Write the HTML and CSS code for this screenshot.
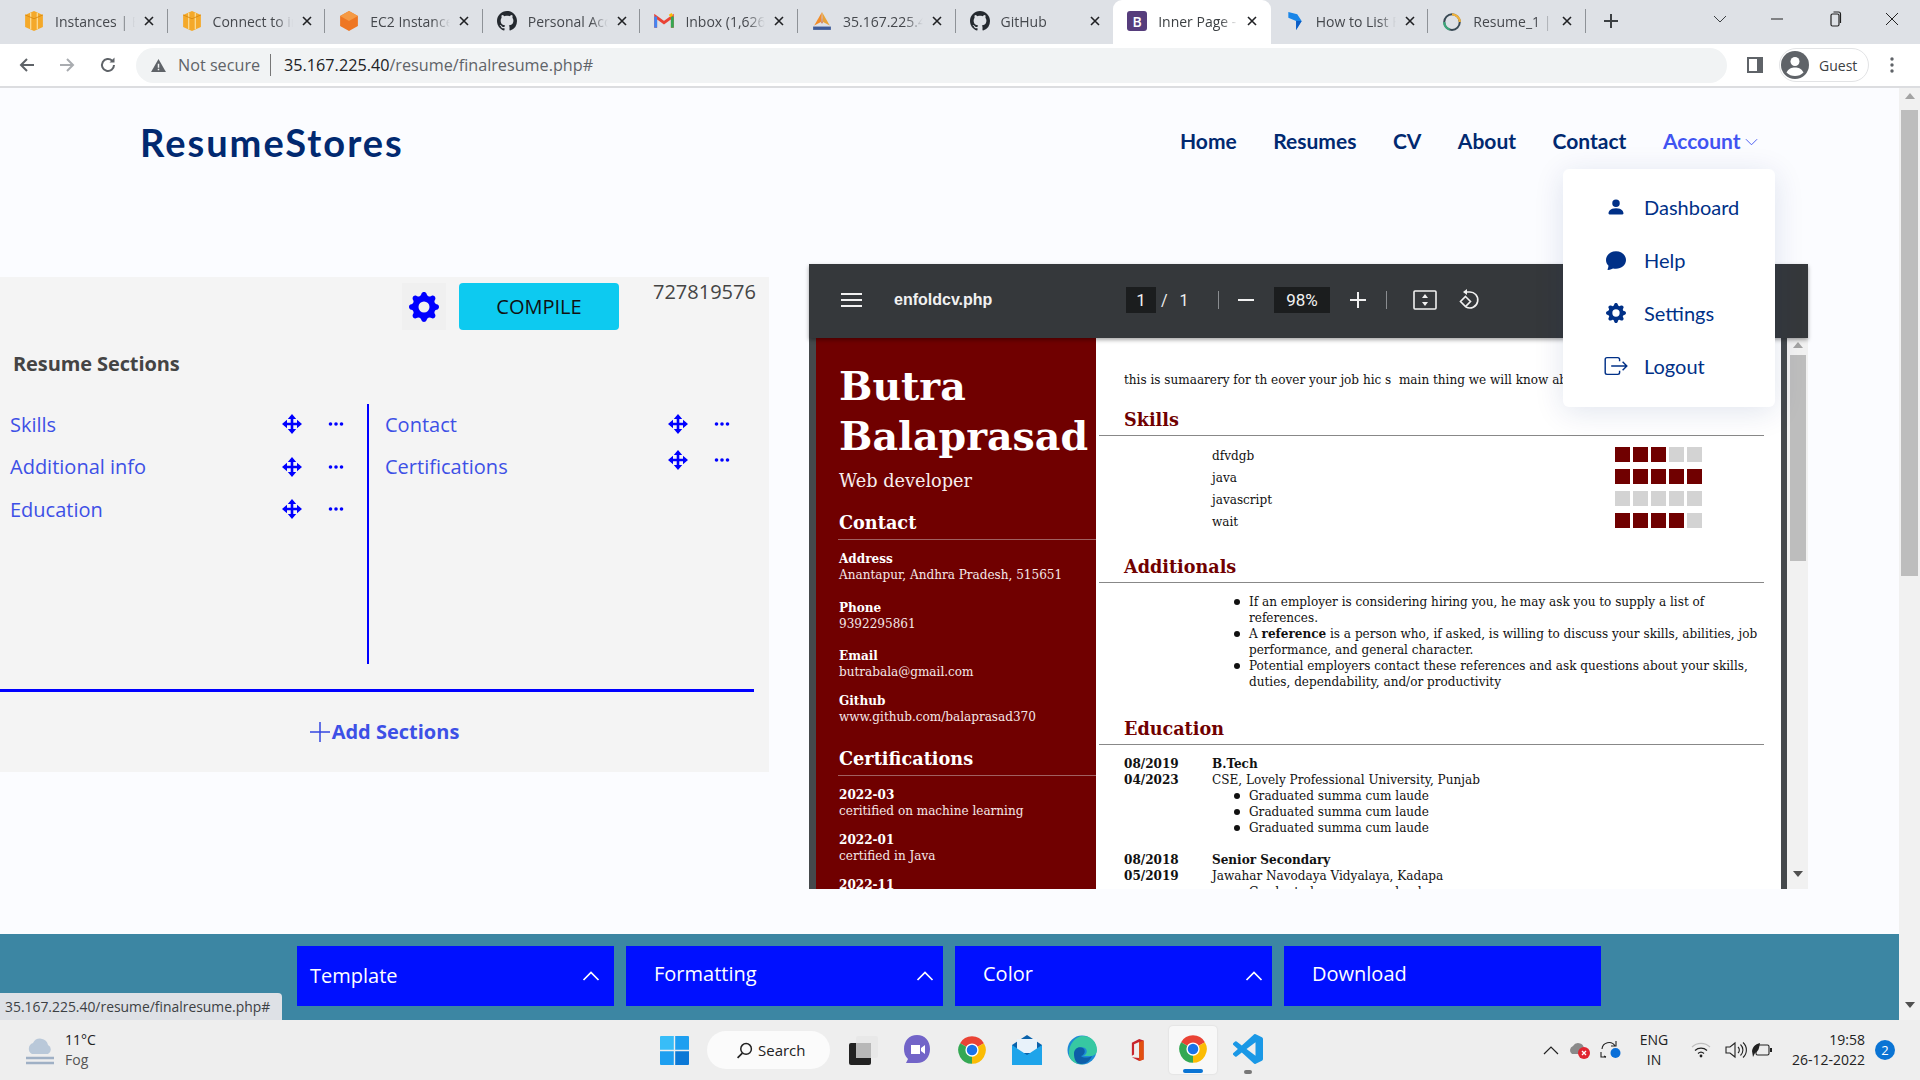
FILE: index.html
```html
<!DOCTYPE html>
<html lang="en">
<head>
<meta charset="utf-8">
<title>Inner Page</title>
<link rel="stylesheet" href="styles.css">
</head>
<body>
<svg class="defs" width="0" height="0" aria-hidden="true">
  <defs>
    <symbol id="gh" viewBox="0 0 16 16"><path d="M8 0C3.58 0 0 3.58 0 8c0 3.54 2.29 6.53 5.47 7.59.4.07.55-.17.55-.38 0-.19-.01-.82-.01-1.49-2.01.37-2.53-.49-2.69-.94-.09-.23-.48-.94-.82-1.13-.28-.15-.68-.52-.01-.53.63-.01 1.08.58 1.23.82.72 1.21 1.87.87 2.33.66.07-.52.28-.87.51-1.07-1.78-.2-3.64-.89-3.64-3.95 0-.87.31-1.59.82-2.15-.08-.2-.36-1.02.08-2.12 0 0 .67-.21 2.2.82.64-.18 1.32-.27 2-.27.68 0 1.36.09 2 .27 1.53-1.04 2.2-.82 2.2-.82.44 1.1.16 1.92.08 2.12.51.56.82 1.27.82 2.15 0 3.07-1.87 3.75-3.65 3.95.29.25.54.73.54 1.48 0 1.07-.01 1.93-.01 2.2 0 .21.15.46.55.38A8.013 8.013 0 0016 8c0-4.42-3.58-8-8-8z" fill="currentColor"/></symbol>
    <symbol id="gear" viewBox="0 0 16 16"><path d="M9.405 1.05c-.413-1.4-2.397-1.4-2.81 0l-.1.34a1.464 1.464 0 0 1-2.105.872l-.31-.17c-1.283-.698-2.686.705-1.987 1.987l.169.311c.446.82.023 1.841-.872 2.105l-.34.1c-1.4.413-1.4 2.397 0 2.81l.34.1a1.464 1.464 0 0 1 .872 2.105l-.17.31c-.698 1.283.705 2.686 1.987 1.987l.311-.169a1.464 1.464 0 0 1 2.105.872l.1.34c.413 1.4 2.397 1.4 2.81 0l.1-.34a1.464 1.464 0 0 1 2.105-.872l.31.17c1.283.698 2.686-.705 1.987-1.987l-.169-.311a1.464 1.464 0 0 1 .872-2.105l.34-.1c1.4-.413 1.4-2.397 0-2.81l-.34-.1a1.464 1.464 0 0 1-.872-2.105l.17-.31c.698-1.283-.705-2.686-1.987-1.987l-.311.169a1.464 1.464 0 0 1-2.105-.872l-.1-.34zM8 10.93a2.929 2.929 0 1 1 0-5.86 2.929 2.929 0 0 1 0 5.858z" fill="currentColor"/></symbol>
    <symbol id="x" viewBox="0 0 12 12"><path d="M2 2l8 8M10 2l-8 8" stroke="currentColor" stroke-width="1.6" fill="none"/></symbol>
    <symbol id="move" viewBox="0 0 20 20"><path d="M10 2v16M2 10h16" stroke="currentColor" stroke-width="2.600"/><path d="M10 0l4.200 5H5.800zM10 20l-4.200-5h8.400zM0 10l5-4.200v8.400zM20 10l-5 4.200V5.800z" fill="currentColor"/></symbol>
    <symbol id="dots" viewBox="0 0 16 4"><circle cx="2.500" cy="2" r="1.800" fill="currentColor"/><circle cx="8" cy="2" r="1.800" fill="currentColor"/><circle cx="13.500" cy="2" r="1.800" fill="currentColor"/></symbol>
    <symbol id="chev" viewBox="0 0 18 10"><path d="M1.500 9L9 1.500 16.500 9" stroke="currentColor" stroke-width="1.700" fill="none"/></symbol>
    <symbol id="box" viewBox="0 0 18 18"><path d="M9 0l8 3.500v11L9 18l-8-3.500v-11z" fill="#f4a92a"/><path d="M6 1.500v15M12 1.500v15" stroke="#fbd98e" stroke-width="1.200"/><path d="M1 3.500l8 3.500 8-3.500" fill="none" stroke="#d98a12" stroke-width=".8"/></symbol>
    <symbol id="chrome" viewBox="0 0 24 24"><path d="M2.470 6.500A11 11 0 0 1 21.530 6.500L12 12z" fill="#ea4335"/><path d="M21.530 6.500A11 11 0 0 1 12 23L12 12z" fill="#fbbc04"/><path d="M12 23A11 11 0 0 1 2.470 6.500L12 12z" fill="#34a853"/><circle cx="12" cy="12" r="5.300" fill="#fff"/><circle cx="12" cy="12" r="4.200" fill="#1a73e8"/></symbol>
  </defs>
</svg>

<div class="app">
  <div class="tabs">
    <div class="tab"><svg class="fav"><use href="#box"/></svg><span class="tab-title">Instances | EC2</span><svg class="tab-x"><use href="#x"/></svg><i class="sep"></i></div>
    <div class="tab"><svg class="fav"><use href="#box"/></svg><span class="tab-title">Connect to instance</span><svg class="tab-x"><use href="#x"/></svg><i class="sep"></i></div>
    <div class="tab"><svg class="fav" viewBox="0 0 18 18"><path d="M9 0l8 4.500v9L9 18l-8-4.500v-9z" fill="#ee7623"/><path d="M9 0l8 4.500L9 9 1 4.500z" fill="#f59a45"/></svg><span class="tab-title">EC2 Instance Connect</span><svg class="tab-x"><use href="#x"/></svg><i class="sep"></i></div>
    <div class="tab"><svg class="fav gh"><use href="#gh"/></svg><span class="tab-title">Personal Access</span><svg class="tab-x"><use href="#x"/></svg><i class="sep"></i></div>
    <div class="tab"><svg class="fav" viewBox="0 0 18 14"><path d="M1.500 13V3l7.500 5.500L16.500 3v10" fill="none" stroke="#ea4335" stroke-width="2.600"/><path d="M1.500 13V3" stroke="#4285f4" stroke-width="2.600"/><path d="M16.500 13V3" stroke="#34a853" stroke-width="2.600"/><path d="M14 2.500l2.500-1.500" stroke="#fbbc04" stroke-width="2.600"/></svg><span class="tab-title">Inbox (1,626) - gmail</span><svg class="tab-x"><use href="#x"/></svg><i class="sep"></i></div>
    <div class="tab"><svg class="fav" viewBox="0 0 18 18"><path d="M9 1l-1 9-6 3z" fill="#f28c28"/><path d="M9 1l1 9 6 3z" fill="#e8a33a"/><path d="M9 3l-.6 8h1.200z" fill="#c9571b"/><path d="M1 14h16v3H1z" fill="#3f5c99"/></svg><span class="tab-title">35.167.225.40 / localhost</span><svg class="tab-x"><use href="#x"/></svg><i class="sep"></i></div>
    <div class="tab"><svg class="fav gh"><use href="#gh"/></svg><span class="tab-title">GitHub</span><svg class="tab-x"><use href="#x"/></svg></div>
    <div class="tab tab-active"><span class="fav fav-b">B</span><span class="tab-title">Inner Page - Resume</span><svg class="tab-x"><use href="#x"/></svg></div>
    <div class="tab"><svg class="fav" viewBox="0 0 18 18"><path d="M3 1l8 2 4 6-5 8V9L3 6z" fill="#1a86e8"/><path d="M10 9l5 0-5 8z" fill="#0b5cc4"/></svg><span class="tab-title">How to List Files</span><svg class="tab-x"><use href="#x"/></svg><i class="sep"></i></div>
    <div class="tab"><svg class="fav" viewBox="0 0 18 18"><circle cx="9" cy="10" r="7" fill="none" stroke="#3a4a55" stroke-width="1.800"/><path d="M9 3a7 7 0 0 1 7 7" fill="none" stroke="#f0b23c" stroke-width="2"/><path d="M2 10a7 7 0 0 0 5 6.700" fill="none" stroke="#3da67a" stroke-width="2"/></svg><span class="tab-title">Resume_1 | Overleaf</span><svg class="tab-x"><use href="#x"/></svg><i class="sep"></i></div>
    <svg class="new-tab" viewBox="0 0 16 16"><path d="M8 1v14M1 8h14" stroke="#3c4043" stroke-width="2"/></svg>
    <svg class="win-caret" viewBox="0 0 14 8"><path d="M1 1l6 6 6-6" fill="none" stroke="#3c4043" stroke-width="1"/></svg>
    <svg class="win-min" viewBox="0 0 12 2"><path d="M0 1h12" stroke="#222" stroke-width="1"/></svg>
    <svg class="win-max" viewBox="0 0 12 16"><rect x="1" y="3" width="8" height="12" rx="1.500" fill="none" stroke="#222" stroke-width="1.200"/><path d="M3.500 1h5a2 2 0 0 1 2 2v9" fill="none" stroke="#222" stroke-width="1.200"/></svg>
    <svg class="win-close" viewBox="0 0 14 14"><path d="M1 1l12 12M13 1L1 13" stroke="#222" stroke-width="1"/></svg>
  </div>

  <div class="toolbar">
    <svg class="nav-icon" viewBox="0 0 18 18"><path d="M16 9H3M9 3L3 9l6 6" fill="none" stroke="#5f6368" stroke-width="2"/></svg>
    <svg class="nav-icon nav-fwd" viewBox="0 0 18 18"><path d="M2 9h13M9 3l6 6-6 6" fill="none" stroke="#a9acb0" stroke-width="2"/></svg>
    <svg class="nav-icon nav-rel" viewBox="0 0 18 18"><path d="M15 9a6 6 0 1 1-1.800-4.300" fill="none" stroke="#5f6368" stroke-width="2"/><path d="M15.500 1.500v5h-5z" fill="#5f6368"/></svg>
    <div class="omni">
      <svg class="warn" viewBox="0 0 16 14"><path d="M8 0l8 14H0z" fill="#5f6368"/><path d="M7.200 5h1.600v4.500H7.200zM7.200 10.500h1.600V12H7.200z" fill="#f1f3f4"/></svg>
      <span class="not-secure">Not secure</span>
      <i class="omni-sep"></i>
      <span class="url"><span class="url-host">35.167.225.40</span>/resume/finalresume.php#</span>
    </div>
    <svg class="side-icon" viewBox="0 0 16 16"><path d="M0 0h16v16H0z" fill="#5f6368"/><path d="M2 2h8v12H2z" fill="#fff"/></svg>
    <div class="guest">
      <svg class="avatar" viewBox="0 0 28 28"><circle cx="14" cy="14" r="14" fill="#5f6368"/><circle cx="14" cy="10.500" r="4.500" fill="#fff"/><path d="M5.500 21.500c2-4 5-5 8.500-5s6.500 1 8.500 5a12 12 0 0 1-17 0z" fill="#fff"/></svg>
      <span>Guest</span>
    </div>
    <svg class="kebab" viewBox="0 0 4 16"><circle cx="2" cy="2" r="1.700" fill="#5f6368"/><circle cx="2" cy="8" r="1.700" fill="#5f6368"/><circle cx="2" cy="14" r="1.700" fill="#5f6368"/></svg>
  </div>

  <div class="viewport">
    <main class="main">
      <header class="site-head">
        <div class="logo">ResumeStores</div>
        <nav class="site-nav">
          <div>Home</div><div>Resumes</div><div>CV</div><div>About</div><div>Contact</div>
          <div class="acct">Account</div>
          <svg class="nav-caret" viewBox="0 0 14 8"><path d="M1 1l6 6 6-6" fill="none" stroke="#4154f1" stroke-width="1"/></svg>
        </nav>
      </header>

      <div class="menu">
        <div class="menu-item"><svg class="menu-icon" viewBox="0 0 16 16"><path d="M3 14s-1 0-1-1 1-4 6-4 6 3 6 4-1 1-1 1H3zm5-6a3 3 0 1 0 0-6 3 3 0 0 0 0 6z" fill="#003087"/></svg><span>Dashboard</span></div>
        <div class="menu-item"><svg class="menu-icon" viewBox="0 0 16 16"><path d="M16 8c0 3.870-3.580 7-8 7a9 9 0 0 1-2.350-.3c-.58.3-1.930.87-4.150 1.230-.2.030-.35-.17-.27-.36.350-.82.660-1.910.760-2.900C.77 11.450 0 9.800 0 8c0-3.870 3.580-7 8-7s8 3.130 8 7z" fill="#003087"/></svg><span>Help</span></div>
        <div class="menu-item"><svg class="menu-icon menu-gear"><use href="#gear"/></svg><span>Settings</span></div>
        <div class="menu-item"><svg class="menu-icon" viewBox="0 0 20 16"><path d="M13 4V2.500A1.500 1.500 0 0 0 11.500 1h-9A1.500 1.500 0 0 0 1 2.500v11A1.500 1.500 0 0 0 2.500 15h9a1.500 1.500 0 0 0 1.500-1.500V12M6 8h13M15.500 4.500L19 8l-3.500 3.500" fill="none" stroke="#003087" stroke-width="1.200"/></svg><span>Logout</span></div>
      </div>

      <div class="workspace">
        <section class="panel">
          <div class="panel-top">
            <div class="gear-box"><svg class="gear-icon"><use href="#gear"/></svg></div>
            <button class="compile">COMPILE</button>
            <span class="doc-id">727819576</span>
          </div>
          <h2 class="panel-title">Resume Sections</h2>
          <div class="columns">
            <div class="col col-left">
              <div class="sec-row"><span class="sec-name">Skills</span><svg class="sec-move"><use href="#move"/></svg><svg class="sec-dots"><use href="#dots"/></svg></div>
              <div class="sec-row"><span class="sec-name">Additional info</span><svg class="sec-move"><use href="#move"/></svg><svg class="sec-dots"><use href="#dots"/></svg></div>
              <div class="sec-row"><span class="sec-name">Education</span><svg class="sec-move"><use href="#move"/></svg><svg class="sec-dots"><use href="#dots"/></svg></div>
            </div>
            <div class="col col-right">
              <div class="sec-row"><span class="sec-name">Contact</span><svg class="sec-move"><use href="#move"/></svg><svg class="sec-dots"><use href="#dots"/></svg></div>
              <div class="sec-row sec-row-high"><span class="sec-name">Certifications</span><svg class="sec-move"><use href="#move"/></svg><svg class="sec-dots"><use href="#dots"/></svg></div>
            </div>
          </div>
          <div class="panel-rule"></div>
          <div class="add-sec"><svg class="add-plus" viewBox="0 0 20 20"><path d="M10 0v20M0 10h20" stroke="#3346e0" stroke-width="1.500"/></svg>Add Sections</div>
        </section>

        <section class="viewer">
          <div class="viewer-bar">
            <svg class="vb-menu" viewBox="0 0 21 14"><path d="M0 1h21M0 7h21M0 13h21" stroke="#f1f1f1" stroke-width="2"/></svg>
            <span class="vb-file">enfoldcv.php</span>
            <span class="vb-input vb-page">1</span>
            <span class="vb-total">/ &nbsp;&nbsp;1</span>
            <i class="vb-sep"></i>
            <svg class="vb-minus" viewBox="0 0 16 2"><path d="M0 1h16" stroke="#f1f1f1" stroke-width="2"/></svg>
            <span class="vb-input vb-zoom">98%</span>
            <svg class="vb-plus" viewBox="0 0 16 16"><path d="M8 0v16M0 8h16" stroke="#f1f1f1" stroke-width="2"/></svg>
            <i class="vb-sep vb-sep2"></i>
            <svg class="vb-fit" viewBox="0 0 24 20"><rect x="1" y="1" width="22" height="18" rx="1" fill="none" stroke="#f1f1f1" stroke-width="1.600"/><path d="M12 4l3 4H9zM12 16l-3-4h6z" fill="#f1f1f1"/></svg>
            <svg class="vb-rot" viewBox="0 0 22 22"><path d="M8 3h3a8 8 0 1 1-3 15" fill="none" stroke="#f1f1f1" stroke-width="1.600"/><path d="M9 0v6L5 3z" fill="#f1f1f1"/><path d="M7.500 7.500l5 5-5 5-5-5z" fill="none" stroke="#f1f1f1" stroke-width="1.600"/></svg>
          </div>
          <div class="viewer-body">
            <div class="pdf-page">
              <aside class="cv-side">
                <h1 class="cv-name">Butra Balaprasad</h1>
                <p class="cv-role">Web developer</p>
                <h3 class="cv-side-h">Contact</h3>
                <div class="cv-item cv-item-first"><b>Address</b><br>Anantapur, Andhra Pradesh, 515651</div>
                <div class="cv-item cv-item-mid"><b>Phone</b><br>9392295861</div>
                <div class="cv-item cv-item-tight"><b>Email</b><br>butrabala@gmail.com</div>
                <div class="cv-item"><b>Github</b><br>www.github.com/balaprasad370</div>
                <h3 class="cv-side-h cv-side-h2">Certifications</h3>
                <div class="cv-item cv-item-first cv-item-tight"><b>2022-03</b><br>ceritified on machine learning</div>
                <div class="cv-item cv-item-tight"><b>2022-01</b><br>certified in Java</div>
                <div class="cv-item"><b>2022-11</b></div>
              </aside>
              <div class="cv-main">
                <p class="cv-summary">this is sumaarery for th eover your job hic s&nbsp; main thing we will know about you</p>
                <h3 class="cv-h cv-h-first">Skills</h3>
                <div class="skills">
                  <div class="skill"><span>dfvdgb</span><div class="meter"><i class="on"></i><i class="on"></i><i class="on"></i><i></i><i></i></div></div>
                  <div class="skill"><span>java</span><div class="meter"><i class="on"></i><i class="on"></i><i class="on"></i><i class="on"></i><i class="on"></i></div></div>
                  <div class="skill"><span>javascript</span><div class="meter"><i></i><i></i><i></i><i></i><i></i></div></div>
                  <div class="skill"><span>wait</span><div class="meter"><i class="on"></i><i class="on"></i><i class="on"></i><i class="on"></i><i></i></div></div>
                </div>
                <h3 class="cv-h">Additionals</h3>
                <ul class="cv-list cv-list-add">
                  <li>If an employer is considering hiring you, he may ask you to supply a list of references.</li>
                  <li>A <b>reference</b> is a person who, if asked, is willing to discuss your skills, abilities, job performance, and general character.</li>
                  <li>Potential employers contact these references and ask questions about your skills, duties, dependability, and/or productivity</li>
                </ul>
                <h3 class="cv-h cv-h-edu">Education</h3>
                <div class="edu">
                  <div class="edu-dates"><b>08/2019</b><br><b>04/2023</b></div>
                  <div><b>B.Tech</b><br>CSE, Lovely Professional University, Punjab
                    <ul class="cv-list"><li>Graduated summa cum laude</li><li>Graduated summa cum laude</li><li>Graduated summa cum laude</li></ul>
                  </div>
                </div>
                <div class="edu edu-next">
                  <div class="edu-dates"><b>08/2018</b><br><b>05/2019</b></div>
                  <div><b>Senior Secondary</b><br>Jawahar Navodaya Vidyalaya, Kadapa
                    <ul class="cv-list"><li>Graduated summa cum laude</li></ul>
                  </div>
                </div>
              </div>
            </div>
            <div class="sb sb-pdf">
              <svg class="sb-up" viewBox="0 0 10 6"><path d="M5 0l5 6H0z" fill="#a3a3a3"/></svg>
              <div class="sb-thumb"></div>
              <svg class="sb-down" viewBox="0 0 10 6"><path d="M5 6L0 0h10z" fill="#505050"/></svg>
            </div>
          </div>
        </section>
      </div>

      <div class="action-bar">
        <button class="act act-t">Template<svg class="act-chev"><use href="#chev"/></svg></button>
        <button class="act">Formatting<svg class="act-chev"><use href="#chev"/></svg></button>
        <button class="act">Color<svg class="act-chev"><use href="#chev"/></svg></button>
        <button class="act">Download</button>
      </div>
    </main>
    <div class="sb sb-page">
      <svg class="sb-up" viewBox="0 0 10 6"><path d="M5 0l5 6H0z" fill="#a3a3a3"/></svg>
      <div class="sb-thumb"></div>
      <svg class="sb-down" viewBox="0 0 10 6"><path d="M5 6L0 0h10z" fill="#505050"/></svg>
    </div>
    <div class="status">35.167.225.40/resume/finalresume.php#</div>
  </div>

  <footer class="taskbar">
    <div class="weather">
      <svg class="w-icon" viewBox="0 0 32 32"><path d="M8 20a6 6 0 0 1 1-11 8 8 0 0 1 15 2 5 5 0 0 1 0 9z" fill="#b9c8d9"/><path d="M2 24h28M2 29h28" stroke="#9fb0c5" stroke-width="2.500"/></svg>
      <div class="w-text"><span>11°C</span><span class="w-sub">Fog</span></div>
    </div>
    <div class="tb-center">
      <svg class="tb-win" viewBox="0 0 29 29"><path d="M0 1a1 1 0 0 1 1-1h12.800v13.800H0z" fill="#38bdf8"/><path d="M15.200 0H28a1 1 0 0 1 1 1v12.800H15.200z" fill="#1e9ff0"/><path d="M0 15.200h13.800V29H1a1 1 0 0 1-1-1z" fill="#1e9ff0"/><path d="M15.200 15.200H29V28a1 1 0 0 1-1 1H15.200z" fill="#0b78d6"/></svg>
      <div class="tb-search"><svg class="tb-glass" viewBox="0 0 16 16"><circle cx="9.500" cy="6.500" r="5" fill="none" stroke="#222" stroke-width="1.400"/><path d="M6 10.500L1.500 15" stroke="#222" stroke-width="1.600"/></svg>Search</div>
      <svg class="tb-app tb-tv" viewBox="0 0 30 30"><rect x="7" y="1" width="22" height="22" rx="2" fill="#e8e8e8"/><rect x="0" y="8" width="22" height="22" rx="2" fill="#222"/><rect x="7" y="8" width="15" height="15" fill="#b8b8b8"/></svg>
      <svg class="tb-app" viewBox="0 0 30 30"><path d="M15 0c8 0 13 6 13 14s-5 14-13 14H4l2-4C3 21 2 18 2 14 2 6 7 0 15 0z" fill="#7264c8"/><path d="M9 10h9v9H9zM19 13l4-3v9l-4-3z" fill="#fff"/></svg>
      <svg class="tb-app"><use href="#chrome"/></svg>
      <svg class="tb-app" viewBox="0 0 30 30"><path d="M0 10L15 0l15 10v20H0z" fill="#0a62ab"/><path d="M5 4h20v14H5z" fill="#e8f2fa"/><path d="M0 10l15 10 15-10v20H0z" fill="#1ea4ea"/></svg>
      <svg class="tb-app" viewBox="0 0 30 30"><circle cx="15" cy="15" r="14.500" fill="#1c8ad6"/><path d="M2 20C1 9 9 1 16 1c8 0 14 6 14 14 0 4-3 6-7 6h-7c4-1 5-6 2-8-4-2-9 0-9 6 0 6 4 10 9 10.500C9 30 3 26 2 20z" fill="#37c8a2"/><path d="M7 19c0-6 5-8 9-6 3 2 2 7-2 8 2 2 7 2 11 0-2 5-6 8-11 8-5 0-7-5-7-10z" fill="#0d5ea8"/></svg>
      <svg class="tb-app tb-office" viewBox="0 0 30 30"><path d="M8 5l10-5 6 2v26l-6 2-10-5 10 1V4l-7 3v14l-3 2z" fill="#c8242c"/><path d="M18 4l6-2v26l-6 2z" fill="#e2500f"/></svg>
      <div class="tb-active"><svg class="tb-app"><use href="#chrome"/></svg><i class="tb-pill"></i></div>
      <div class="tb-vs"><svg class="tb-app" viewBox="0 0 24 24"><path d="M23.150 2.587L18.210.21a1.494 1.494 0 0 0-1.705.29l-9.460 8.630-4.120-3.128a.999.999 0 0 0-1.276.057L.327 7.261A1 1 0 0 0 .326 8.740L3.899 12 .326 15.260a1 1 0 0 0 .001 1.479L1.650 17.940a.999.999 0 0 0 1.276.057l4.120-3.128 9.460 8.630a1.492 1.492 0 0 0 1.704.29l4.942-2.377A1.500 1.500 0 0 0 24 20.060V3.939a1.500 1.500 0 0 0-.85-1.352zm-5.146 14.861L10.826 12l7.178-5.448v10.896z" fill="#1a98e6"/></svg><i class="tb-dot"></i></div>
    </div>
    <div class="tray">
      <svg class="tr-caret" viewBox="0 0 16 9"><path d="M1 8l7-7 7 7" fill="none" stroke="#222" stroke-width="1.200"/></svg>
      <svg class="tr-cloud" viewBox="0 0 22 20"><path d="M3 14a4.500 4.500 0 0 1 1-8 6 6 0 0 1 11 2 3.500 3.500 0 0 1 0 6z" fill="#8a8a8a"/><circle cx="15" cy="13" r="6" fill="#e0242f"/><path d="M13 11l4 4M17 11l-4 4" stroke="#fff" stroke-width="1.300"/></svg>
      <svg class="tr-sync" viewBox="0 0 22 20"><path d="M2 9a7 7 0 0 1 13-3M6 17a7 7 0 0 1-2-1" fill="none" stroke="#222" stroke-width="1.100"/><path d="M16 1v5h-5M1 12v5h5" fill="none" stroke="#222" stroke-width="1.100"/><circle cx="15.500" cy="13" r="5" fill="#0a6fd8"/></svg>
      <div class="tr-lang"><span>ENG</span><span>IN</span></div>
      <svg class="tr-wifi" viewBox="0 0 20 16"><path d="M1 5a13 13 0 0 1 18 0" fill="none" stroke="#bdbdbd" stroke-width="1.200"/><path d="M4 8.500a9 9 0 0 1 12 0M7 11.500a4.500 4.500 0 0 1 6 0" fill="none" stroke="#222" stroke-width="1.200"/><circle cx="10" cy="14" r="1.400" fill="#222"/></svg>
      <svg class="tr-vol" viewBox="0 0 22 18"><path d="M1 6v6h4l5 4V2L5 6z" fill="none" stroke="#222" stroke-width="1.100"/><path d="M13 6a4 4 0 0 1 0 6M15.500 3.500a7.500 7.500 0 0 1 0 11M18 1.500a10 10 0 0 1 0 15" fill="none" stroke="#222" stroke-width="1.100"/></svg>
      <svg class="tr-bat" viewBox="0 0 22 16"><rect x="5" y="3" width="13" height="10" rx="1.500" fill="none" stroke="#222" stroke-width="1.100"/><path d="M19 6h2v4h-2z" fill="#222"/><path d="M1 9c1-5 4-7 8-8-1 5-1 8-5 10l-2 4z" fill="#222"/></svg>
      <div class="tr-clock"><span>19:58</span><span>26-12-2022</span></div>
      <span class="tr-badge">2</span>
    </div>
  </footer>
</div>
</body>
</html>
```

FILE: styles.css
```css
* { box-sizing: border-box; }
html, body { margin: 0; padding: 0; }
body { width: 1920px; height: 1080px; overflow: hidden; font-family: "Open Sans", sans-serif; background: #fbfcff; }
.defs { position: absolute; }
svg { display: block; flex: none; }
.app { display: flex; flex-direction: column; width: 1920px; height: 1080px; }

/* tab strip */
.tabs { display: flex; align-items: center; height: 44px; padding-left: 10px; background: #dee1e6; color: #45484d; }
.tab { display: flex; align-items: center; flex: none; width: 157.6px; height: 44px; padding: 0 0 2px 15px; font-size: 14px; }
.fav { width: 20px; height: 20px; flex: none; margin-left: -1px; margin-right: -1px; }
.gh { color: #24292f; }
.fav-b { display: flex; align-items: center; justify-content: center; border-radius: 3px; background: #563d7c; color: #fff; font-weight: 600; font-size: 14px; }
.tab-title { width: 80px; margin-left: 12px; white-space: nowrap; overflow: hidden; -webkit-mask-image: linear-gradient(90deg, #000 78%, transparent); mask-image: linear-gradient(90deg, #000 78%, transparent); }
.tab-x { width: 12px; height: 12px; margin-left: 8px; color: #202124; }
.sep { display: block; width: 1px; height: 24px; margin-left: auto; background: #8e9297; }
.tab-active { background: #fff; border-radius: 9px 9px 0 0; color: #3c4043; }
.new-tab { width: 16px; height: 16px; margin-left: 17px; margin-top: -2px; }
.win-caret { width: 14px; height: 8px; margin-left: 94px; margin-top: -6px; }
.win-min { width: 12px; height: 2px; margin-left: 44px; margin-top: -6px; }
.win-max { width: 12px; height: 16px; margin-left: 47px; margin-top: -6px; }
.win-close { width: 14px; height: 14px; margin-left: 43px; margin-top: -6px; }

/* toolbar */
.toolbar { display: flex; align-items: center; height: 44px; background: #fff; border-bottom: 2px solid #dcdde0; padding: 0 0 0 18px; }
.nav-icon { width: 18px; height: 18px; }
.nav-fwd { margin-left: 22px; }
.nav-rel { margin-left: 23px; }
.omni { display: flex; align-items: center; width: 1591px; height: 35px; margin-left: 19px; padding-left: 15px; border-radius: 18px; background: #f1f3f4; font-size: 16.2px; color: #5f6368; }
.warn { width: 15px; height: 13px; }
.not-secure { margin-left: 12px; }
.omni-sep { display: block; width: 1px; height: 22px; margin-left: 10px; background: #777; }
.url { margin-left: 13px; }
.url-host { color: #202124; }
.side-icon { width: 16px; height: 16px; margin-left: 20px; }
.guest { display: flex; align-items: center; width: 90px; height: 34px; margin-left: 16px; padding-left: 1px; border: 1px solid #e2e3e5; border-radius: 17px; font-size: 14px; color: #3c4043; }
.avatar { width: 28px; height: 28px; }
.guest span { margin-left: 10px; }
.kebab { width: 4px; height: 16px; margin-left: 21px; }

/* page */
.viewport { position: relative; display: flex; height: 932px; }
.main { position: relative; display: flex; flex-direction: column; width: 1899px; background: #fbfcff; }
.site-head { display: flex; justify-content: space-between; height: 176px; padding: 32px 141px 0 140px; font-family: Lato, "Noto Sans", sans-serif; color: #012970; }
.logo { font-size: 38px; line-height: 44px; font-weight: 700; letter-spacing: 2px; }
.site-nav { display: flex; align-items: center; gap: 36.5px; height: 42px; font-size: 21px; font-weight: 700; line-height: 42px; }
.acct { color: #4154f1; position: relative; z-index: 10; }
.nav-caret { width: 13px; height: 8px; margin-top: 2px; margin-left: -32px; position: relative; z-index: 10; }

.menu { position: absolute; top: 81px; left: 1563px; width: 212px; height: 238px; padding-top: 11px; background: #fff; border-radius: 6px; box-shadow: 0 5px 30px rgba(1, 41, 112, .12); z-index: 3; font-family: Lato, "Noto Sans", sans-serif; }
.menu-item { display: flex; align-items: center; height: 53px; padding-left: 41px; font-size: 20px; color: #003087; }
.menu-item span { margin-left: 16px; }
.menu-icon { width: 24px; height: 20px; }
.menu-gear { color: #003087; }

.workspace { display: flex; align-items: flex-start; height: 670px; }

/* left panel */
.panel { width: 769px; height: 495px; margin-top: 13px; padding-top: 6px; background: #f4f4f4; }
.panel-top { display: flex; align-items: flex-start; padding-left: 402px; }
.gear-box { display: flex; align-items: center; justify-content: center; width: 44px; height: 47px; background: #f0f0f0; }
.gear-icon { width: 30px; height: 30px; color: #0000ff; }
.compile { width: 160px; height: 47px; margin-left: 13px; padding: 0; border: 0; border-radius: 4px; background: #0dcaf0; font: 400 20px "Open Sans", sans-serif; color: #111; }
.doc-id { margin-left: 34px; font-size: 20px; line-height: 18px; color: #444; }
.panel-title { margin: 20px 0 0 13px; font-size: 20px; line-height: 28px; font-weight: 700; color: #444; letter-spacing: -.1px; }
.columns { display: flex; height: 260px; margin-top: 26px; }
.col { height: 260px; }
.col-left { width: 369px; padding-left: 10px; border-right: 2px solid #0000ff; }
.col-right { width: 400px; padding-left: 16px; }
.sec-row { display: flex; align-items: center; height: 42.6px; font-size: 20px; color: #3d50e6; }
.sec-row:first-child { margin-top: -1px; }
.sec-name { width: 272px; }
.col-right .sec-name { width: 283px; }
.sec-move { width: 20px; height: 20px; color: #0000ff; }
.sec-dots { width: 16px; height: 4px; margin-left: 26px; color: #0000ff; }
.sec-row-high .sec-move, .sec-row-high .sec-dots { position: relative; top: -7px; }
.panel-rule { width: 754px; height: 3px; margin-top: 25px; background: #0000ff; }
.add-sec { display: flex; align-items: center; justify-content: center; gap: 2px; height: 78px; font-size: 20px; font-weight: 700; color: #3d50e6; }
.add-plus { width: 20px; height: 20px; margin-top: 2px; }

/* pdf viewer */
.viewer { width: 999px; height: 625px; margin-left: 40px; background: #525659; }
.viewer-bar { position: relative; display: flex; align-items: center; height: 74px; padding: 0 0 2px 32px; background: #35383b; color: #f1f1f1; font-family: Roboto, sans-serif; box-shadow: 0 2px 4px rgba(0, 0, 0, .35); }
.vb-menu { width: 21px; height: 14px; }
.vb-file { margin-left: 32px; width: 232px; font-size: 16px; font-weight: 700; font-family: "Liberation Sans", sans-serif; }
.vb-input { display: flex; align-items: center; justify-content: center; height: 26px; background: #1b1d1e; font-size: 17px; }
.vb-page { width: 30px; }
.vb-total { width: 57px; margin-left: 5px; font-size: 16px; }
.vb-sep { display: block; width: 1px; height: 18px; background: #8a8d90; }
.vb-minus { width: 16px; height: 2px; margin-left: 19px; }
.vb-zoom { width: 56px; margin-left: 20px; }
.vb-plus { width: 16px; height: 16px; margin-left: 20px; }
.vb-sep2 { margin-left: 20px; }
.vb-fit { width: 24px; height: 20px; margin-left: 26px; }
.vb-rot { width: 24px; height: 22px; margin-left: 20px; }

.viewer-body { display: flex; height: 551px; padding-left: 7px; overflow: hidden; background: #45494c; }
.pdf-page { display: flex; width: 965px; height: 551px; overflow: hidden; background: #fff; font-family: "DejaVu Serif", serif; font-size: 12.05px; line-height: 16px; color: #111; }
.cv-side { flex: none; width: 280px; height: 551px; padding: 23px 0 0 23px; overflow: hidden; background: #700000; color: #f5e8e8; }
.cv-name { margin: 0; font-size: 39.5px; line-height: 50px; font-weight: 700; color: #fff; }
.cv-role { margin: 7px 0 0; font-size: 17.7px; line-height: 26px; color: #f8eeee; }
.cv-side-h { margin: 16px 0 0 -1px; padding: 0 0 0 1px; height: 30px; font-size: 17.7px; line-height: 26px; font-weight: 700; color: #fff; border-bottom: 1px solid #a06060; }
.cv-side-h2 { margin-top: 21px; }
.cv-item { margin-bottom: 17px; }
.cv-item-first { margin-top: 11px; }
.cv-item-mid { margin-bottom: 16px; }
.cv-item-tight { margin-bottom: 13px; }
.cv-item b { color: #fff; }

.cv-main { flex: none; width: 668px; padding-top: 34px; }
.cv-summary { margin: 0; padding-left: 28px; width: 1000px; white-space: pre; }
.cv-h { margin: 21px 0 0 3px; width: 665px; height: 30px; padding-left: 25px; font-size: 17.6px; line-height: 27px; font-weight: 700; color: #700000; border-bottom: 1px solid #888; }
.cv-h-first { margin-top: 18px; }
.cv-h-edu { margin-top: 25px; }
.skills { margin-top: 9px; margin-bottom: -1px; }
.skill { display: flex; align-items: center; justify-content: space-between; height: 22px; padding-left: 116px; padding-right: 62px; }
.meter { display: flex; gap: 3px; }
.meter i { display: block; width: 15px; height: 15px; background: #d3d3d3; margin-top: -3px; }
.meter i.on { background: #700000; }
.cv-list { margin: 0; padding: 0 0 0 37px; list-style: none; }
.cv-list li { position: relative; }
.cv-list li::before { content: ""; position: absolute; left: -15px; top: 5px; width: 6px; height: 6px; border-radius: 50%; background: #111; }
.cv-list-add { margin-top: 11px; padding-left: 153px; width: 672px; }
.edu { display: flex; margin-top: 11px; padding-left: 28px; }
.edu-dates { width: 88px; flex: none; }
.edu-next { margin-top: 16px; }

.sb { display: flex; flex-direction: column; background: #f1f1f1; }
.sb-up, .sb-down { width: 10px; height: 6px; }
.sb-thumb { background: #bdbdbd; }
.sb-pdf { flex: none; width: 21px; height: 551px; margin-left: 6px; padding: 4px 0 0 3px; }
.sb-pdf .sb-up { margin-left: 3px; }
.sb-pdf .sb-thumb { width: 16px; height: 206px; margin-top: 7px; }
.sb-pdf .sb-down { margin: 310px 0 0 3px; }
.sb-page { width: 21px; height: 932px; padding: 5px 0 0 2px; }
.sb-page .sb-up { margin-left: 4px; }
.sb-page .sb-thumb { width: 17px; height: 466px; margin-top: 11px; }
.sb-page .sb-down { margin: 426px 0 0 4px; }

/* bottom actions */
.action-bar { display: flex; gap: 12px; height: 86px; margin-top: auto; padding: 12px 0 0 297px; background: #3c86a3; }
.act { position: relative; width: 317px; height: 60px; padding: 0 0 5px 28px; border: 0; background: #0010ff; color: #fff; text-align: left; font: 400 20px "Open Sans", sans-serif; }
.act-t { padding: 0 0 1px 13px; }
.act-chev { position: absolute; right: 9px; top: 25px; width: 18px; height: 10px; }
.act-t .act-chev { right: 14px; }

.status { position: absolute; left: 0; bottom: 0; width: 282px; height: 27px; padding-left: 5px; border-radius: 0 4px 0 0; background: #dee1e6; font-size: 13.9px; line-height: 27px; color: #3c4043; white-space: nowrap; z-index: 4; }

/* taskbar */
.taskbar { position: relative; display: flex; align-items: center; height: 60px; background: #eeeeee; font-size: 14px; color: #222; }
.weather { display: flex; align-items: center; width: 660px; padding-left: 24px; }
.w-icon { width: 32px; height: 32px; }
.w-text { display: flex; flex-direction: column; margin-left: 9px; line-height: 20px; font-size: 14px; }
.w-sub { color: #555; }
.tb-center { display: flex; align-items: center; }
.tb-win { width: 29px; height: 29px; }
.tb-search { display: flex; align-items: center; width: 123px; height: 38px; margin-left: 18px; padding-left: 29px; border-radius: 19px; background: #fbfbfb; font-size: 15px; }
.tb-glass { width: 17px; height: 17px; margin-right: 5px; }
.tb-app { width: 30px; height: 30px; }
.tb-center > .tb-app { margin-right: 25px; }
.tb-center > .tb-tv { margin-left: 19px; margin-right: 23px; }
.tb-office { width: 22px; margin-left: 4px; }
.tb-center > .tb-office { margin-right: 21px; }
.tb-active { display: flex; flex-direction: column; align-items: center; width: 48px; height: 48px; padding-top: 8px; background: #f8f8f8; border-radius: 4px; box-shadow: 0 0 2px rgba(0, 0, 0, .12); }
.tb-pill { display: block; width: 20px; height: 4px; margin-top: 5px; border-radius: 2px; background: #0a74d4; }
.tb-vs { display: flex; flex-direction: column; align-items: center; margin-left: 16px; padding-top: 8px; }
.tb-dot { display: block; width: 8px; height: 4px; margin-top: 6px; border-radius: 2px; background: #777; }
.tray { display: flex; align-items: center; margin-left: auto; padding-right: 25px; }
.tr-caret { width: 16px; height: 9px; }
.tr-cloud { width: 22px; height: 20px; margin-left: 10px; }
.tr-sync { width: 22px; height: 20px; margin-left: 9px; }
.tr-lang { display: flex; flex-direction: column; align-items: center; width: 40px; margin-left: 12px; line-height: 20px; font-size: 14px; }
.tr-wifi { width: 20px; height: 16px; margin-left: 17px; }
.tr-vol { width: 22px; height: 18px; margin-left: 14px; }
.tr-bat { width: 22px; height: 16px; margin-left: 4px; }
.tr-clock { display: flex; flex-direction: column; align-items: flex-end; width: 92px; line-height: 20px; font-size: 14px; }
.tr-badge { display: flex; align-items: center; justify-content: center; width: 20px; height: 20px; margin-left: 10px; border-radius: 50%; background: #0a74d4; color: #fff; font-size: 13px; }
```
